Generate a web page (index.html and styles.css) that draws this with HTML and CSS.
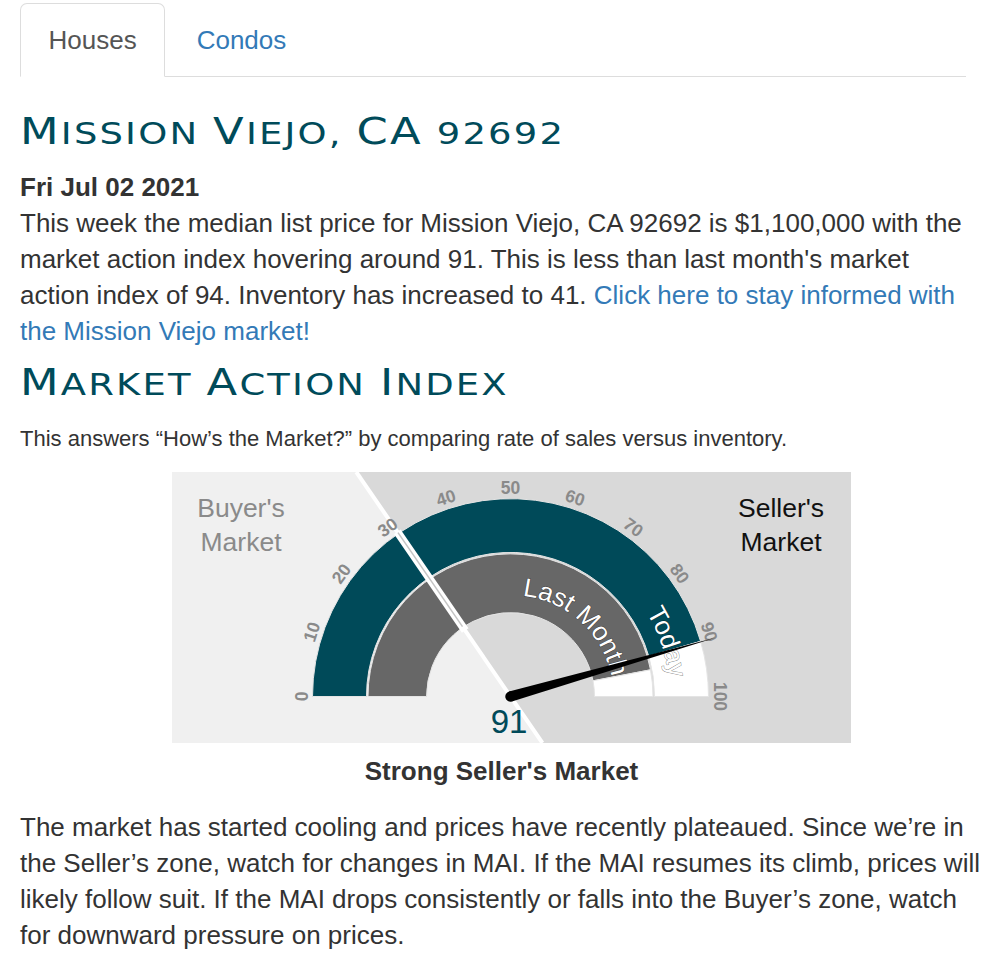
FILE: index.html
```html
<!DOCTYPE html>
<html lang="en">
<head>
<meta charset="utf-8">
<title>Mission Viejo, CA 92692 – Market Action Index</title>
<link rel="stylesheet" href="styles.css">
</head>
<body>
<div class="page">
  <ul class="tabs">
    <li class="tab tab-active">Houses</li>
    <li class="tab"><a class="tab-link" href="#">Condos</a></li>
  </ul>

  <h1 class="title"><span class="title-text"><span class="cap">M</span>ission <span class="cap">V</span>iejo, <span class="cap">CA</span> 92692</span></h1>

  <p class="date">Fri Jul 02 2021</p>
  <p class="summary">This week the median list price for Mission Viejo, CA 92692 is $1,100,000 with the market action index hovering around 91. This is less than last month's market action index of 94. Inventory has increased to 41. <a href="#">Click here to stay informed with the Mission Viejo market!</a></p>

  <h2 class="title section"><span class="title-text"><span class="cap">M</span>arket <span class="cap">A</span>ction <span class="cap">I</span>ndex</span></h2>

  <p class="lead">This answers “How’s the Market?” by comparing rate of sales versus inventory.</p>

  <div class="gauge">
    <svg class="gauge-svg" width="679" height="271" viewBox="0 0 679 271" xmlns="http://www.w3.org/2000/svg">
      <defs>
        <path id="arc-last" d="M350.5,124.0 A101,101 0 0 1 438.0,250.6"/>
        <path id="arc-today" d="M474.5,140.5 A159,159 0 0 1 492.0,265.6"/>
      </defs>
      <rect class="bg-seller" x="0" y="0" width="679" height="271"/>
      <polygon class="bg-buyer" points="0,0 184.3,0 370.4,271 0,271"/>

      <text class="zone zone-buyer" x="69" y="45">Buyer's</text>
      <text class="zone zone-buyer" x="69" y="79">Market</text>
      <text class="zone zone-seller" x="609" y="45">Seller's</text>
      <text class="zone zone-seller" x="609" y="79">Market</text>

      <!-- outer ring: today -->
      <path class="ring-today" d="M140.5,224.5 A198,198 0 0 1 528.6,169.3 L476.8,184.3 A144,144 0 0 0 194.5,224.5 Z"/>
      <path class="ring-rest" d="M528.6,169.3 A198,198 0 0 1 536.5,224.5 L482.5,224.5 A144,144 0 0 0 476.8,184.3 Z"/>
      <!-- inner ring: last month -->
      <path class="ring-last" d="M196,224.5 A142.5,142.5 0 0 1 478.5,197.8 L421.0,208.8 A84,84 0 0 0 254.5,224.5 Z"/>
      <path class="ring-rest" d="M478.5,197.8 A142.5,142.5 0 0 1 481,224.5 L422.5,224.5 A84,84 0 0 0 421.0,208.8 Z"/>

      <!-- buyer / seller divider -->
      <line class="divider" x1="184.3" y1="0" x2="370.4" y2="271"/>
      <line class="divider-cut" x1="293.2" y1="158.6" x2="225.3" y2="59.7"/>
      <line class="divider-shade" x1="290.5" y1="154.6" x2="226.0" y2="60.7"/>

      <!-- tick labels -->
      <text class="tick" transform="translate(129.5,224.5) rotate(-90)">0</text>
      <text class="tick" transform="translate(139.7,159.9) rotate(-72)">10</text>
      <text class="tick" transform="translate(169.4,101.7) rotate(-54)">20</text>
      <text class="tick" transform="translate(215.7,55.4) rotate(-36)">30</text>
      <text class="tick" transform="translate(273.9,25.7) rotate(-18)">40</text>
      <text class="tick" transform="translate(338.5,15.5)">50</text>
      <text class="tick" transform="translate(403.1,25.7) rotate(18)">60</text>
      <text class="tick" transform="translate(461.3,55.4) rotate(36)">70</text>
      <text class="tick" transform="translate(507.6,101.7) rotate(54)">80</text>
      <text class="tick" transform="translate(537.3,159.9) rotate(72)">90</text>
      <text class="tick" transform="translate(547.5,224.5) rotate(90)">100</text>

      <text class="arc-label"><textPath href="#arc-last">Last Month</textPath></text>
      <text class="arc-label"><textPath href="#arc-today">Today</textPath></text>

      <!-- needle -->
      <g transform="translate(338.5,224.5) rotate(-16)">
        <path class="needle" d="M0,-5.2 L213,0 L0,5.2 Z"/>
        <circle class="needle" cx="0" cy="0" r="5.2"/>
      </g>

      <text class="value" x="337" y="261">91</text>
    </svg>
  </div>
  <p class="caption">Strong Seller's Market</p>

  <p class="summary summary-bottom">The market has started cooling and prices have recently plateaued. Since we’re in the Seller’s zone, watch for changes in MAI. If the MAI resumes its climb, prices will likely follow suit. If the MAI drops consistently or falls into the Buyer’s zone, watch for downward pressure on prices.</p>
</div>
</body>
</html>
```

FILE: styles.css
```css
html, body {
  margin: 0;
  background: #fff;
}

body {
  font-family: "Liberation Sans", Arial, Helvetica, sans-serif;
  font-size: 26px;
  color: #333;
}

a {
  color: #337ab7;
  text-decoration: none;
}

.page {
  width: 963px;
  padding-left: 20px;
}

/* tabs */
.tabs {
  display: flex;
  list-style: none;
  margin: 0 17px 0 0;
  padding: 3px 0 0;
  border-bottom: 1px solid #ddd;
}

.tab {
  padding: 17px 27.5px;
  line-height: 38px;
  border: 1px solid transparent;
  border-radius: 7px 7px 0 0;
  margin: 0 3px -1px 0;
}

.tab-active {
  border-color: #ddd #ddd transparent;
  background: #fff;
  color: #555;
}

.tab-link {
  color: #337ab7;
}

/* headings */
.title {
  font-family: "DejaVu Sans", "Liberation Sans", sans-serif;
  font-weight: normal;
  color: #004b5a;
  text-transform: uppercase;
  font-size: 30.5px;
  letter-spacing: 1.8px;
  line-height: 40px;
  margin: 35px 0 15px;
  white-space: nowrap;
}

.title-text {
  display: inline-block;
  transform: scaleX(1.21);
  transform-origin: 0 50%;
}

.cap {
  font-size: 37px;
}

.section {
  margin: 14px 0 0;
}

.date {
  font-weight: bold;
  margin: 0;
  line-height: 36px;
}

.summary {
  margin: 0;
  line-height: 36px;
}

.summary-bottom {
  margin-top: 20px;
}

.lead {
  font-size: 22px;
  line-height: 30px;
  margin: 19px 0 0;
}

/* gauge */
.gauge {
  margin: 18px 0 0 152px;
  width: 679px;
  height: 271px;
}

.gauge-svg {
  display: block;
}

.bg-seller { fill: #d9d9d9; }
.bg-buyer { fill: #f0f0f0; }

.zone {
  font-family: "Liberation Sans", Arial, sans-serif;
  font-size: 26.5px;
  text-anchor: middle;
}
.zone-buyer { fill: #8a8a8a; }
.zone-seller { fill: #111; }

.ring-today { fill: #004a59; stroke: #e4e4e4; stroke-width: 1; }
.ring-last { fill: #676767; stroke: #e4e4e4; stroke-width: 1; }
.ring-rest { fill: #fff; stroke: #e4e4e4; stroke-width: 1; }

.divider { stroke: #fff; stroke-width: 4; }
.divider-cut { stroke: #fff; stroke-width: 8; }
.divider-shade { stroke: #c4c4c4; stroke-width: 1.5; }

.tick {
  font-family: "Liberation Sans", Arial, sans-serif;
  font-weight: bold;
  font-size: 17.5px;
  fill: #8a8a8a;
  text-anchor: middle;
  dominant-baseline: central;
}

.arc-label {
  font-family: "Liberation Sans", Arial, sans-serif;
  font-size: 26px;
  fill: #fff;
  stroke: rgba(0, 0, 0, 0.5);
  stroke-width: 0.9;
  paint-order: stroke;
}

.needle { fill: #000; }

.value {
  font-family: "Liberation Sans", Arial, sans-serif;
  font-size: 33px;
  fill: #004a59;
  text-anchor: middle;
}

.caption {
  font-weight: bold;
  text-align: center;
  line-height: 36px;
  margin: 10px 0 0;
}
```
